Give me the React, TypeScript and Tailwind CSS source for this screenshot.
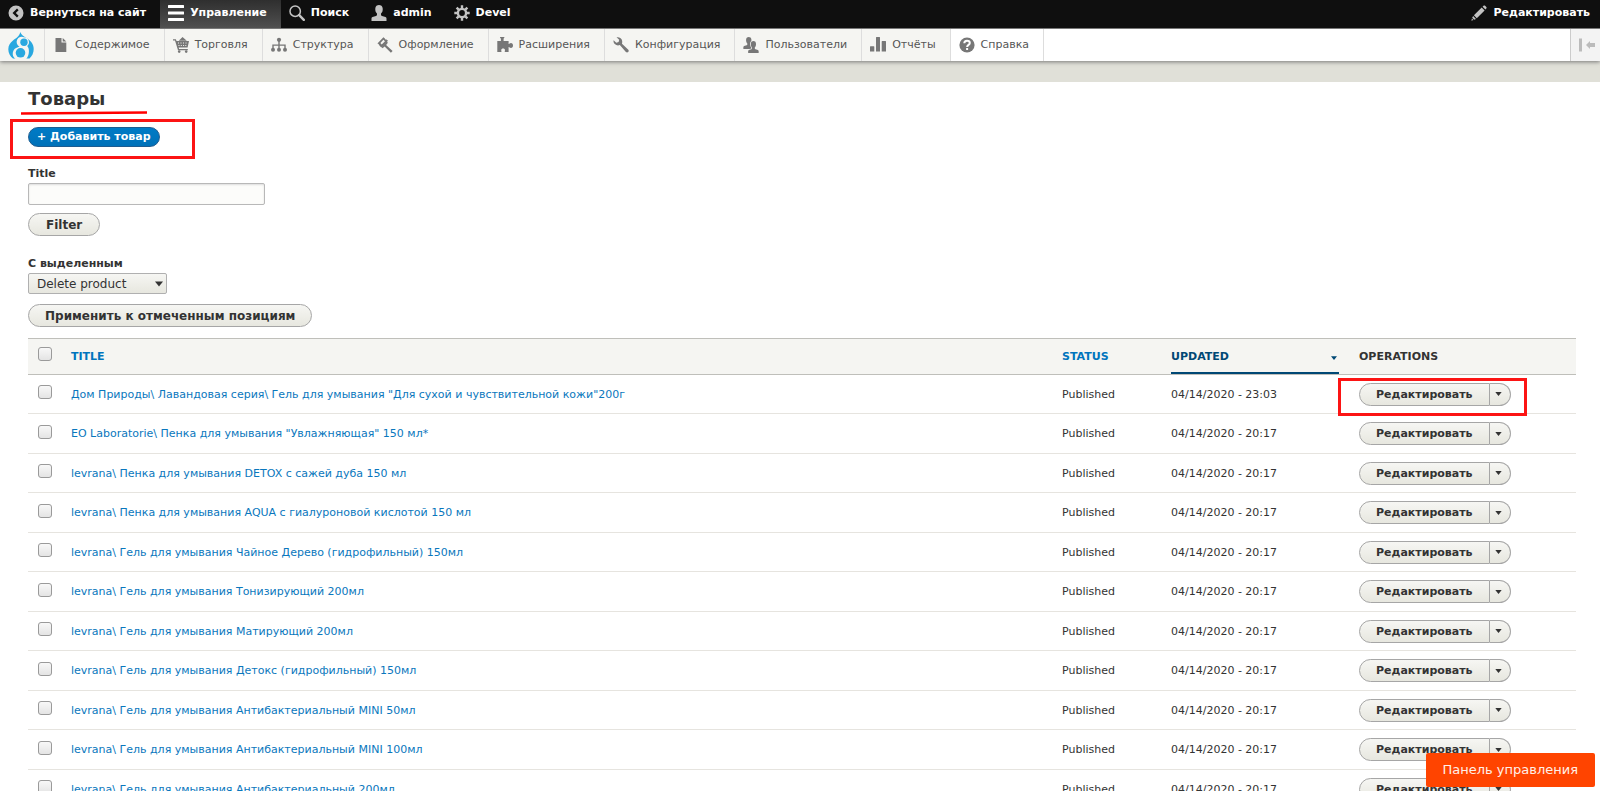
import { ReactNode } from "react";

type Product = {
  id: number;
  title: string;
  status: string;
  updated: string;
};

const products: Product[] = [
  {
    id: 1,
    title:
      'Дом Природы\\ Лавандовая серия\\ Гель для умывания "Для сухой и чувствительной кожи"200г',
    status: "Published",
    updated: "04/14/2020 - 23:03",
  },
  {
    id: 2,
    title: 'EO Laboratorie\\ Пенка для умывания "Увлажняющая" 150 мл*',
    status: "Published",
    updated: "04/14/2020 - 20:17",
  },
  {
    id: 3,
    title: "levrana\\ Пенка для умывания DETOX с сажей дуба 150 мл",
    status: "Published",
    updated: "04/14/2020 - 20:17",
  },
  {
    id: 4,
    title: "levrana\\ Пенка для умывания AQUA с гиалуроновой кислотой 150 мл",
    status: "Published",
    updated: "04/14/2020 - 20:17",
  },
  {
    id: 5,
    title: "levrana\\ Гель для умывания Чайное Дерево (гидрофильный) 150мл",
    status: "Published",
    updated: "04/14/2020 - 20:17",
  },
  {
    id: 6,
    title: "levrana\\ Гель для умывания Тонизирующий 200мл",
    status: "Published",
    updated: "04/14/2020 - 20:17",
  },
  {
    id: 7,
    title: "levrana\\ Гель для умывания Матирующий 200мл",
    status: "Published",
    updated: "04/14/2020 - 20:17",
  },
  {
    id: 8,
    title: "levrana\\ Гель для умывания Детокс (гидрофильный) 150мл",
    status: "Published",
    updated: "04/14/2020 - 20:17",
  },
  {
    id: 9,
    title: "levrana\\ Гель для умывания Антибактериальный MINI 50мл",
    status: "Published",
    updated: "04/14/2020 - 20:17",
  },
  {
    id: 10,
    title: "levrana\\ Гель для умывания Антибактериальный MINI 100мл",
    status: "Published",
    updated: "04/14/2020 - 20:17",
  },
  {
    id: 11,
    title: "levrana\\ Гель для умывания Антибактериальный 200мл",
    status: "Published",
    updated: "04/14/2020 - 20:17",
  },
];

const Icon = ({ children }: { children: ReactNode }) => (
  <svg viewBox="0 0 16 16" className="w-4 h-4 shrink-0" fill="currentColor">
    {children}
  </svg>
);

const person =
  "M.5 16v-2.400c0-.7.500-1.400 1-1.600l3.500-1c.6-.2 1-.9 1-1.500v-1S4.300 7 4.300 5V3.500C4.300 1 6.300 0 8 0s3.700 1 3.700 3.500V5c0 2-1.700 3.500-1.700 3.500v1c0 .6.4 1.300 1 1.500l3.500 1c.5.2 1 .9 1 1.600V16z";

const icons = {
  back: (
    <path
      fillRule="evenodd"
      d="M8 .5a7.500 7.500 0 1 0 0 15 7.500 7.500 0 0 0 0-15zM10.600 10.800 9 12.400 4.500 8 9 3.600l1.600 1.600L7.800 8z"
    />
  ),
  menu: (
    <g fill="#fff">
      <rect y="0" width="16" height="3" rx=".5" />
      <rect y="6.500" width="16" height="3" rx=".5" />
      <rect y="13" width="16" height="3" rx=".5" />
    </g>
  ),
  search: (
    <g fill="none" stroke="currentColor">
      <circle cx="6.200" cy="6.200" r="5.200" strokeWidth="1.500" />
      <path d="m10.200 10.200 4.600 4.600" strokeWidth="2.400" strokeLinecap="round" />
    </g>
  ),
  person: <path d={person} />,
  gear: (
    <g fill="none" stroke="currentColor">
      <circle cx="8" cy="8" r="4.100" strokeWidth="2.400" />
      <path
        strokeWidth="2.400"
        d="M8 .3v3M8 12.700v3M.3 8h3M12.700 8h3M2.600 2.600l2.100 2.100M11.300 11.300l2.100 2.100M13.400 2.600l-2.100 2.100M4.700 11.300l-2.100 2.100"
      />
    </g>
  ),
  pencil: (
    <path d="M11.600 1.700 12.500.8c.5-.5 1.100-.5 1.600 0l1.200 1.200c.5.500.5 1.100 0 1.600l-.9.9zM10.700 2.500l2.900 2.900-7.800 7.800-2.900-2.900zM2.100 11l2.900 2.900-1.800.9-2-2zM.9 13.600l1.500 1.500-2 .6z" />
  ),
  file: <path d="M2.500 1h6v4.500h4.800V15H2.500zM9.700 1l3.600 3.500H9.700z" />,
  cart: (
    <g>
      <path d="M7 2.500 9.500 0l4.300 3.800H5.700z" />
      <path
        fillRule="evenodd"
        d="M0 2.200h2.900l.6 1.900H16l-1.400 6.500H5.700l.4 1.400h8.700v1.200H5L2 3.400H0zM5 5.400v1h1v-1zm2.500 0v1h1v-1zm2.500 0v1h1v-1zm2.500 0v1h1v-1zM5.500 8v1h1V8zm2.300 0v1h1V8zm2.300 0v1h1V8zm2.200 0v1h1V8z"
      />
      <circle cx="6.200" cy="14.600" r="1.300" />
      <circle cx="13.200" cy="14.600" r="1.300" />
    </g>
  ),
  structure: (
    <g>
      <circle cx="8" cy="2.800" r="2.100" />
      <path d="M7.300 4h1.400v3.400h6v4h-1.400V8.800H8.700v3H7.300v-3H2.700v2.600H1.300v-4h6z" />
      <circle cx="2" cy="12.800" r="2" />
      <circle cx="8" cy="12.800" r="2" />
      <circle cx="14" cy="12.800" r="2" />
    </g>
  ),
  paint: (
    <g>
      <path
        fillRule="evenodd"
        d="M6.400.3.4 6.600c1 .2 1.700 1 2.200 2.200l1.700 1.700L11 3.800 9.500 2.400c-.9.100-1.700-.2-1.600-1zM6.400 2.700l-3 3.200 1.300 1.500L8 4.200z"
      />
      <path d="m9.700 4.600 1.200 1.200-1.800 2.100 6.500 6-1.700 1.800-6.300-6.200-2 1.700-1.100-1.200z" />
    </g>
  ),
  puzzle: (
    <path d="M3 0h4.400c.2.600-.8 1.200-.8 2V4h5v3c.7.200 1.300-.9 2.300-.9 1.400 0 2.100 1 2.100 2.400s-.7 2.400-2.100 2.400c-1 0-1.600-1.100-2.300-.9v5H7.800c-.2-.8.200-1.300.2-2 0-1-.8-1.600-1.900-1.600S4.200 12 4.200 13c0 .7.400 1.200.2 2H.3V4h3.600V2C3.900 1.200 2.800.600 3 0z" />
  ),
  wrench: (
    <path d="M15.300 12.700 9 6.700C9.600 4.600 9.200 2.600 7.600 1.300 6.500.3 5 0 3.500.3l2.700 2.500-.6 2.300-2.300.6L.6 3.200c-.3 1.400.1 2.900 1.200 3.900 1.400 1.400 3.300 1.700 5 1L12.900 15c.7.600 1.600.6 2.300 0 .6-.7.700-1.600.1-2.300z" />
  ),
  people: (
    <g>
      <path d={person} transform="scale(.72 .75)" />
      <path
        d={person}
        transform="translate(4.800 4) scale(.7 .75)"
        stroke="#f5f5f2"
        strokeWidth="1.800"
        paintOrder="stroke"
      />
    </g>
  ),
  chart: (
    <path d="M.5 9.300h3.300c.3 0 .5.200.5.500V14.500H0V9.800c0-.3.200-.5.500-.5zM6.500 0h3c.3 0 .5.200.5.500v14H6V.5c0-.3.200-.5.500-.5zM12.200 4h3.300c.3 0 .5.200.5.500v10h-4.300v-10c0-.3.200-.5.500-.5z" />
  ),
  help: (
    <g>
      <circle cx="8" cy="8" r="7.600" />
      <g fill="none" stroke="#fff" strokeWidth="2">
        <path d="M5.300 6.300C5.300 4.600 6.300 3.700 8 3.700s2.800.8 2.800 2.300c0 1.900-2.700 1.900-2.700 4" />
        <path d="M8.100 11v2" />
      </g>
    </g>
  ),
};

const tray = [
  { label: "Содержимое", icon: icons.file },
  { label: "Торговля", icon: icons.cart },
  { label: "Структура", icon: icons.structure },
  { label: "Оформление", icon: icons.paint },
  { label: "Расширения", icon: icons.puzzle },
  { label: "Конфигурация", icon: icons.wrench },
  { label: "Пользователи", icon: icons.people },
  { label: "Отчёты", icon: icons.chart },
  { label: "Справка", icon: icons.help },
];

const Arrow = ({ className }: { className: string }) => (
  <svg viewBox="0 0 8 5" className={className} fill="currentColor">
    <path d="M0 0h8L4 5z" />
  </svg>
);

const buttonStyle =
  "border border-[#a6a6a6] bg-linear-to-b from-[#f6f6f3] to-[#e7e7df] font-bold text-[#333]";

const Checkbox = ({ label }: { label: string }) => (
  <input
    type="checkbox"
    aria-label={label}
    className="block appearance-none w-3.5 h-3.5 rounded-[3px] border border-[#9a9a9a] bg-linear-to-b from-[#f8f8f8] to-[#e4e4e4]"
  />
);

const BarItem = ({ icon, label, className = "" }: { icon: ReactNode; label: string; className?: string }) => (
  <a href="#" className={`flex items-center gap-1.5 pl-2 pb-0.5 ${className}`}>
    <span className="text-[#c3c3c3]">
      <Icon>{icon}</Icon>
    </span>
    {label}
  </a>
);

const Toolbar = () => (
  <div className="relative shadow-[0_1px_4px_#777]">
    <nav className="flex h-7 bg-[#0f0f0f] text-[11px] font-bold text-white">
      <BarItem icon={icons.back} label="Вернуться на сайт" className="pr-3.5" />
      <BarItem
        icon={icons.menu}
        label="Управление"
        className="bg-linear-to-b from-[#2f2f2f] to-[#505050] pr-3.5"
      />
      <BarItem icon={icons.search} label="Поиск" className="pr-3.5" />
      <BarItem icon={icons.person} label="admin" className="pr-3.5" />
      <BarItem icon={icons.gear} label="Devel" className="pr-3.5" />
      <BarItem icon={icons.pencil} label="Редактировать" className="ml-auto pr-2.5" />
    </nav>
    <nav className="flex h-[33px] border-t border-[#777] bg-white text-[11px] text-[#565656]">
      <a
        href="#"
        aria-label="Drupal"
        className="flex items-center w-[45px] pl-2 border-r border-[#ddd] bg-[#f5f5f2]"
      >
        <svg viewBox="0 0 26 27" className="w-[26px] h-[27px]">
          <path
            fill="#29a8e0"
            d="M12.300 0c.8 2.800 3 4.200 5.700 5.800 4.200 2.600 7.700 5.700 7.700 11.200 0 4-1.700 7.200-4.200 9.500H5C2.200 24.500.3 21 .3 17.300c0-4 2-6.800 4.700-8.900C8 6.200 11.500 4.300 12.300 0z"
          />
          <path
            fill="#f5f5f2"
            d="M16 5.200a5 5 0 0 1 3.200 8.800c1.300 1.500 1.900 3.600 1.700 5.700-.2 3-1.100 5.300-2.700 7.300H7.500A6.600 6.600 0 0 1 9.900 15.200c.7-.3 1-.5 1.700-.6A5 5 0 0 1 16 5.200z"
          />
          <circle cx="16" cy="10.200" r="3.700" fill="#29a8e0" />
          <circle cx="12.500" cy="20.800" r="4.800" fill="#29a8e0" />
        </svg>
      </a>
      {tray.map((item) => (
        <a
          key={item.label}
          href="#"
          className="flex items-center gap-1.5 pl-2 pr-3.5 border-r border-[#ddd] bg-[#f5f5f2] last-of-type:bg-white"
        >
          <span className="text-[#777]">
            <Icon>{item.icon}</Icon>
          </span>
          {item.label}
        </a>
      ))}
      <button
        aria-label="Вертикальная ориентация"
        className="ml-auto flex items-center w-[30px] pl-2 border-l border-[#ccc] bg-[#f3f3f3] text-[#bbb]"
      >
        <Icon>
          <path d="M0 1.500h3v13H0zM7 8l4-4V6h5v4h-5v2z" />
        </Icon>
      </button>
    </nav>
  </div>
);

function App() {
  const renderRow = (item: Product) => (
    <tr key={item.id} className="odd:h-[39px] even:h-10 border-b border-[#e6e4df]">
      <td className="pl-2.5 pb-1">
        <Checkbox label={item.title} />
      </td>
      <td className="pl-3 pt-0.5">
        <a href="#" className="text-[#0a77bd]">
          {item.title}
        </a>
      </td>
      <td className="pl-3 pt-0.5">{item.status}</td>
      <td className="pl-3 pt-0.5">{item.updated}</td>
      <td className="pl-3">
        <div className="flex h-[23px]">
          <button className={`rounded-l-full px-4 pt-0.5 ${buttonStyle}`}>Редактировать</button>
          <button
            aria-label="Список дополнительных действий"
            className={`flex items-center justify-center w-[21px] rounded-r-full border-l-0 pr-0.5 ${buttonStyle}`}
          >
            <Arrow className="w-[7px] h-1" />
          </button>
        </div>
      </td>
    </tr>
  );

  return (
    <div className="min-h-screen bg-white font-['DejaVu_Sans',sans-serif] text-[11px] text-[#333]">
      <Toolbar />
      <div className="h-[21px] bg-[#e0e0d8]" />

      <main className="relative pl-7 pr-6">
        <h1 className="pt-1 text-[18px] leading-[26px] font-bold">Товары</h1>
        {/* RED MARKS */}
        <svg viewBox="0 0 126 4" className="absolute left-[21px] top-[29px] w-[126px] h-1">
          <path d="M0 2.500 126 1.500" stroke="#f00" strokeWidth="2.500" />
        </svg>
        <div className="absolute left-2.5 top-[37px] w-[185px] h-10 border-3 border-[#fc1414]" />
        <div className="absolute right-[73px] top-[296px] w-[189px] h-[38px] border-3 border-[#fc1414]" />

        <button className="block mt-[15px] h-5 px-2 rounded-full border border-[#1e5c90] bg-linear-to-b from-[#007bc6] to-[#0071b8] font-bold text-white">
          + Добавить товар
        </button>

        {/* FILTER */}
        <form className="mt-[18px]">
          <label htmlFor="title" className="block leading-[18px] font-bold">
            Title
          </label>
          <input
            id="title"
            type="text"
            className="block w-[237px] h-[22px] px-2 rounded-[2px] border border-[#b8b8b8] bg-[#fcfcfa] shadow-[inset_0_1px_2px_#ddd]"
          />
          <button
            type="button"
            className={`block mt-2 h-[23px] px-[17px] rounded-full text-[12px] ${buttonStyle}`}
          >
            Filter
          </button>
        </form>

        {/* BULK ACTIONS */}
        <form className="mt-[19px]">
          <label htmlFor="action" className="block leading-[18px] font-bold">
            С выделенным
          </label>
          <div className="relative w-[139px]">
            <select
              id="action"
              className="block appearance-none w-full h-[21px] pl-2 rounded-[2px] border border-[#b0b0b0] bg-linear-to-b from-[#f6f6f3] to-[#e7e7df] text-[12px]"
            >
              <option>Delete product</option>
            </select>
            <Arrow className="absolute right-1 top-2 w-2 h-1.5 pointer-events-none" />
          </div>
          <button
            type="button"
            className={`block mt-2.5 h-[23px] px-4 rounded-full text-[12px] ${buttonStyle}`}
          >
            Применить к отмеченным позициям
          </button>
        </form>

        {/* LIST */}
        <table className="mt-[11px] w-full table-fixed text-left">
          <thead>
            <tr className="h-9 border-y border-[#bfbfba] bg-[#f5f5f2]">
              <th className="w-[31px] pl-2.5 pb-1.5">
                <Checkbox label="Выбрать все строки" />
              </th>
              <th className="pl-3 pt-0.5">
                <a href="#" className="text-[#0074bd]">
                  TITLE
                </a>
              </th>
              <th className="w-[109px] pl-3 pt-0.5">
                <a href="#" className="text-[#0074bd]">
                  STATUS
                </a>
              </th>
              <th className="w-[188px] pl-3 pr-2">
                <a
                  href="#"
                  className="flex items-center justify-between h-[35px] pt-1 pr-0.5 border-b-2 border-[#004875] text-[#004875]"
                >
                  UPDATED
                  <Arrow className="w-1.5 h-1" />
                </a>
              </th>
              <th className="w-[229px] pl-3 pt-0.5">OPERATIONS</th>
            </tr>
          </thead>
          <tbody>{products.map((item) => renderRow(item))}</tbody>
        </table>
      </main>

      <button className="fixed right-[5px] bottom-1 h-[34px] px-[17px] rounded-[2px] bg-[#ff4400] text-[13px] text-[#fff0e8]">
        Панель управления
      </button>
    </div>
  );
}

export default App;
